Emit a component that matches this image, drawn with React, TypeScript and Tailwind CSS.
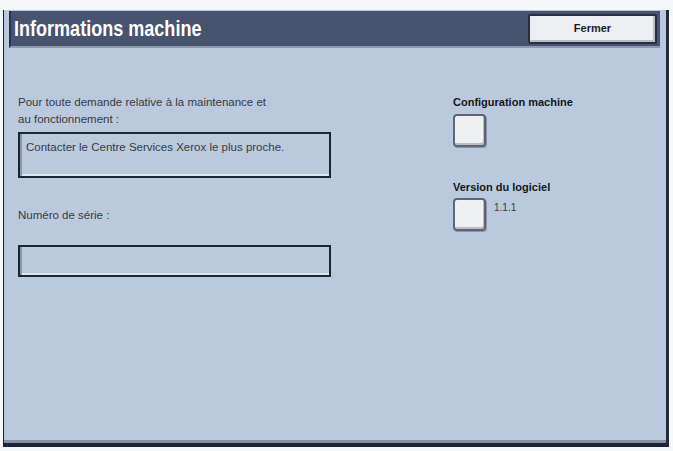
import React from "react";

function SquareButton() {
  return (
    <div className="h-[33px] w-[33px] rounded-[4px] border-2 border-[#5d6473] bg-[#eef0f2] shadow-[inset_-1px_-2px_0_#b9bec6,1px_1px_0_#8b93a3]" />
  );
}

function Field({ h }: { h: string }) {
  return (
    <div
      className={`${h} w-[313px] border-2 border-[#1d2535] bg-[#bac9dc] shadow-[inset_2px_0_0_#8a97ad,inset_0_-2px_0_#dfe6ee]`}
    />
  );
}

export default function App() {
  return (
    <div
      className="h-[451px] w-[673px] overflow-hidden bg-[#f6f7f8] pl-[3px] pt-[10px]"
      style={{ fontFamily: '"Liberation Sans", Arial, sans-serif' }}
    >
      <div className="flex h-[437px] w-[666px] flex-col border-b-[4px] border-l border-r-[3px] border-b-[#1f2433] border-l-[#1a1d24] border-r-[#252a38] bg-[#bac9dc] shadow-[inset_0_-3px_0_#8390a6]">
        {/* header */}
        <div className="ml-[5px] mr-[6px] mt-[1px] flex h-[37px] items-center justify-between border-b-2 border-l-2 border-b-[#8d9ab0] border-l-[#2a3248] bg-[#47536f] pl-[3px] pr-[3px]">
          <span className="inline-block origin-left scale-x-[0.82] text-[22px] font-bold text-white">
            Informations machine
          </span>
          <button className="flex h-[30px] w-[129px] items-center justify-center rounded-[2px] border-2 border-[#2a3040] bg-[#eceef1] text-[11px] font-bold text-[#1b1e25] shadow-[inset_-2px_-2px_0_#b8bec8]">
            Fermer
          </button>
        </div>

        {/* body */}
        <div className="flex flex-1 pl-[14px] pt-[46px]">
          <div className="flex w-[435px] flex-col text-[11.5px] text-[#383b42]">
            <div className="leading-[17px]">
              Pour toute demande relative à la maintenance et
              <br />
              au fonctionnement :
            </div>
            <div className="mt-[4px] h-[46px] w-[313px] border-2 border-[#1d2535] bg-[#bac9dc] pl-[6px] pt-[5px] shadow-[inset_2px_0_0_#8a97ad,inset_0_-2px_0_#dfe6ee]">
              Contacter le Centre Services Xerox le plus proche.
            </div>
            <div className="mt-[29px]">Numéro de série :</div>
            <div className="mt-[21px]">
              <Field h="h-[32px]" />
            </div>
          </div>

          <div className="flex flex-col text-[11px] text-[#15171c]">
            <div className="font-bold">Configuration machine</div>
            <div className="mt-[3px]">
              <SquareButton />
            </div>
            <div className="mt-[32px] font-bold">Version du logiciel</div>
            <div className="mt-[3px] flex items-start gap-[8px]">
              <SquareButton />
              <span className="mt-[2px] text-[10px] font-normal text-[#383b42]">1.1.1</span>
            </div>
          </div>
        </div>
      </div>
    </div>
  );
}
